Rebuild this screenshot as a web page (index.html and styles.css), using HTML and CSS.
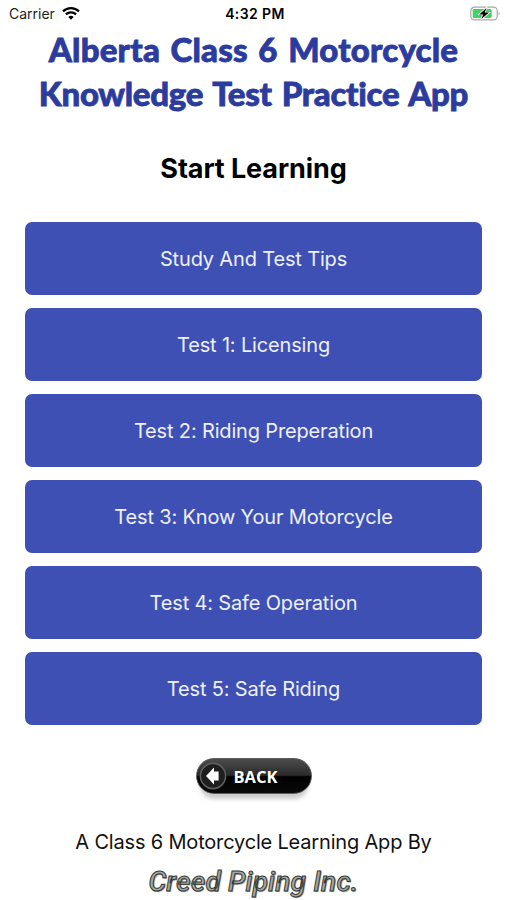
FILE: index.html
```html
<!DOCTYPE html>
<html lang="en">

<head>
  <meta charset="UTF-8">
  <meta name="viewport" content="width=device-width, initial-scale=1.0">
  <title>Alberta Class 6 Motorcycle Knowledge Test Practice App</title>
  <link rel="stylesheet" href="styles.css">
</head>

<body>
  <div class="status-bar">
    <div class="carrier">
      <span>Carrier</span>
      <svg class="wifi" viewBox="0 0 18 13" width="18" height="13">
        <path d="M9 12.7 L6.3 10 A3.8 3.8 0 0 1 11.7 10 Z" fill="#000" />
        <path d="M3.9 7.4 A7.2 7.2 0 0 1 14.1 7.4" fill="none" stroke="#000" stroke-width="2.2" />
        <path d="M1 4.4 A11.4 11.4 0 0 1 17 4.4" fill="none" stroke="#000" stroke-width="2.2" />
      </svg>
    </div>
    <div class="time">4:32 PM</div>
    <svg class="battery" viewBox="0 0 32 16" width="32" height="16">
      <rect x="1.8" y="1.2" width="26.4" height="12.6" rx="3.6" fill="#fff" stroke="#a9a9a9" stroke-width="1.2" />
      <path d="M29.6 5.3 Q31.8 7.5 29.6 9.7 Z" fill="#a9a9a9" />
      <rect x="3.7" y="3" width="19" height="9" rx="1.6" fill="#3fd463" />
      <path d="M17.4 1.9 L10.2 8.4 H14.2 L12.4 13.1 L20 6.6 H15.8 Z" fill="#000" stroke="#fff" stroke-width="1.4" paint-order="stroke" />
    </svg>
  </div>

  <h1 class="title">
    <span class="title-top">Alberta Class 6 Motorcycle</span>
    <span class="title-bottom">Knowledge Test Practice App</span>
  </h1>

  <h2 class="subtitle">Start Learning</h2>

  <div class="menu">
    <button class="menu-button">Study And Test Tips</button>
    <button class="menu-button">Test 1: Licensing</button>
    <button class="menu-button">Test 2: Riding Preperation</button>
    <button class="menu-button">Test 3: Know Your Motorcycle</button>
    <button class="menu-button">Test 4: Safe Operation</button>
    <button class="menu-button">Test 5: Safe Riding</button>
  </div>

  <button class="back-button">
    <svg class="back-arrow" viewBox="0 0 28 28" width="28" height="28">
      <circle cx="14" cy="14" r="12.6" fill="#1e1e1e" stroke="#5d5d5d" stroke-width="1.6" />
      <path d="M7 14 L15 5.6 V9.4 H19.6 V18.6 H15 V22.4 Z" fill="#fff" />
    </svg>
    <span>BACK</span>
  </button>

  <p class="credit">A Class 6 Motorcycle Learning App By</p>
  <div class="company">Creed Piping Inc.</div>
</body>

</html>
```

FILE: styles.css
```css
body {
  background-color: #fff;
  font-family: Inter, "Liberation Sans", sans-serif;
  text-align: center;
  margin: 0;
  padding: 0;
  height: 900px;
  overflow: hidden;
  display: flex;
  flex-direction: column;
  align-items: center;
}

.status-bar {
  box-sizing: border-box;
  width: 100%;
  height: 27px;
  padding: 0 6px 0 9px;
  display: grid;
  grid-template-columns: 1fr auto 1fr;
  align-items: center;
  font-size: 14px;
  line-height: 27px;
  color: #222;
}

.carrier {
  display: flex;
  align-items: center;
  gap: 7px;
}

.time {
  font-weight: 600;
  letter-spacing: 0.4px;
  color: #000;
}

.battery {
  justify-self: end;
}

.title {
  margin: 0;
  font-family: Lato, sans-serif;
  font-size: 33px;
  font-weight: 900;
  font-variant-ligatures: none;
  line-height: 44px;
  color: #2b3b9e;
  -webkit-text-stroke: 0.8px #2b3b9e;
}

.title span {
  display: block;
  white-space: nowrap;
}

.title-top {
  letter-spacing: 0.2px;
  word-spacing: 2.5px;
}

.title-bottom {
  letter-spacing: -0.3px;
  word-spacing: 2.5px;
}

.subtitle {
  margin: 34px 0 0;
  font-size: 27px;
  font-weight: 700;
  letter-spacing: -0.1px;
  line-height: 40px;
  color: #000;
}

.menu {
  width: 457px;
  margin-top: 33px;
  display: flex;
  flex-direction: column;
  gap: 13px;
}

.menu-button {
  height: 73px;
  padding: 0;
  border: none;
  border-radius: 7px;
  background-color: #3e50b4;
  color: #eef0fb;
  font-family: inherit;
  font-size: 20px;
  letter-spacing: -0.16px;
  cursor: pointer;
}

.back-button {
  box-sizing: border-box;
  width: 116px;
  height: 36px;
  flex-shrink: 0;
  margin: 33px 0 0;
  padding: 0 0 0 2px;
  border: 1.5px solid #5c5c5c;
  border-radius: 18px;
  background: linear-gradient(#4c4c4c, #2a2a2a 48%, #000 52%, #0a0a0a);
  box-shadow: 0 9px 4px -4px #ccc;
  display: flex;
  align-items: center;
  gap: 7px;
  color: #fff;
  font-family: "Open Sans", sans-serif;
  font-size: 16.5px;
  font-weight: 700;
  cursor: pointer;
}

.credit {
  margin: 34px 0 0;
  font-size: 20px;
  letter-spacing: -0.18px;
  line-height: 28px;
  color: #111;
}

.company {
  margin-top: 9px;
  font-family: Roboto, sans-serif;
  font-size: 28px;
  font-style: italic;
  font-weight: 500;
  letter-spacing: 0.2px;
  line-height: 34px;
  color: #a2a8a5;
  -webkit-text-stroke: 1px #343a38;
  text-shadow: 1px 1px 1px #8d9290;
}
```
